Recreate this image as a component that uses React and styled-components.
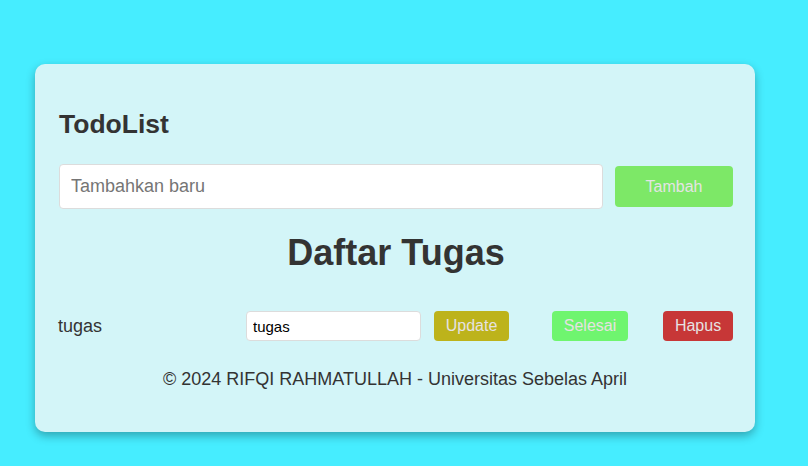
import React from 'react';
import styled, { createGlobalStyle } from 'styled-components';

const GlobalStyle = createGlobalStyle`
  html, body {
    margin: 0;
    padding: 0;
    background-color: #46edff;
    font-family: 'Liberation Sans', Arial, sans-serif;
  }
  * {
    box-sizing: border-box;
  }
`;

const Page = styled.div`
  width: 808px;
  height: 466px;
  padding: 64px 0 0 35px;
  overflow: hidden;
`;

const Card = styled.div`
  width: 720px;
  height: 368px;
  padding: 45px 22px 0 24px;
  background-color: #d3f5f8;
  border-radius: 10px;
  box-shadow: 0 4px 10px rgba(0, 0, 0, 0.3);
  color: #333;
`;

const Title = styled.h2`
  margin: 0;
  font-size: 26.5px;
  font-weight: bold;
  line-height: 30px;
`;

const AddRow = styled.div`
  display: flex;
  align-items: center;
  gap: 12px;
  margin-top: 25px;
`;

const AddInput = styled.input`
  flex: 1;
  height: 45px;
  padding: 0 11px;
  border: 1px solid #dcdcdc;
  border-radius: 4px;
  background: #fff;
  font-family: inherit;
  font-size: 18px;
  color: #333;
  outline: none;
  &::placeholder {
    color: #757575;
  }
`;

const AddButton = styled.button`
  width: 118px;
  height: 41px;
  border: none;
  border-radius: 4px;
  background-color: #7de867;
  color: #e4e4e4;
  font-family: inherit;
  font-size: 16px;
`;

const Heading = styled.h1`
  margin: 24px 0 0;
  text-align: center;
  font-size: 36px;
  font-weight: bold;
  line-height: 40px;
`;

const TaskRow = styled.div`
  display: flex;
  align-items: center;
  margin-top: 38px;
  height: 30px;
`;

const TaskName = styled.span`
  flex: 1;
  font-size: 18px;
  margin-left: -1px;
`;

const EditInput = styled.input`
  width: 175px;
  height: 30px;
  padding: 0 6px;
  border: 1px solid #dcdcdc;
  border-radius: 4px;
  background: #fff;
  font-family: inherit;
  font-size: 15px;
  color: #000;
  outline: none;
`;

const ActionButton = styled.button`
  width: ${(p) => p.$width}px;
  height: 30px;
  padding: 0;
  margin-left: ${(p) => p.$space}px;
  border: none;
  border-radius: 4px;
  background-color: ${(p) => p.$bg};
  color: #e6e2e2;
  font-family: inherit;
  font-size: 16px;
`;

const Footer = styled.p`
  margin: 28px 0 0;
  padding-right: 2px;
  text-align: center;
  font-size: 18px;
  line-height: 21px;
`;

export default function App() {
  return (
    <>
      <GlobalStyle />
      <Page>
        <Card>
          <Title>TodoList</Title>
          <AddRow>
            <AddInput placeholder="Tambahkan baru" />
            <AddButton>Tambah</AddButton>
          </AddRow>
          <Heading>Daftar Tugas</Heading>
          <TaskRow>
            <TaskName>tugas</TaskName>
            <EditInput defaultValue="tugas" />
            <ActionButton $width={75} $space={13} $bg="#bdb31b">Update</ActionButton>
            <ActionButton $width={76} $space={43} $bg="#6ff56f">Selesai</ActionButton>
            <ActionButton $width={70} $space={35} $bg="#c73737">Hapus</ActionButton>
          </TaskRow>
          <Footer>© 2024 RIFQI RAHMATULLAH - Universitas Sebelas April</Footer>
        </Card>
      </Page>
    </>
  );
}
